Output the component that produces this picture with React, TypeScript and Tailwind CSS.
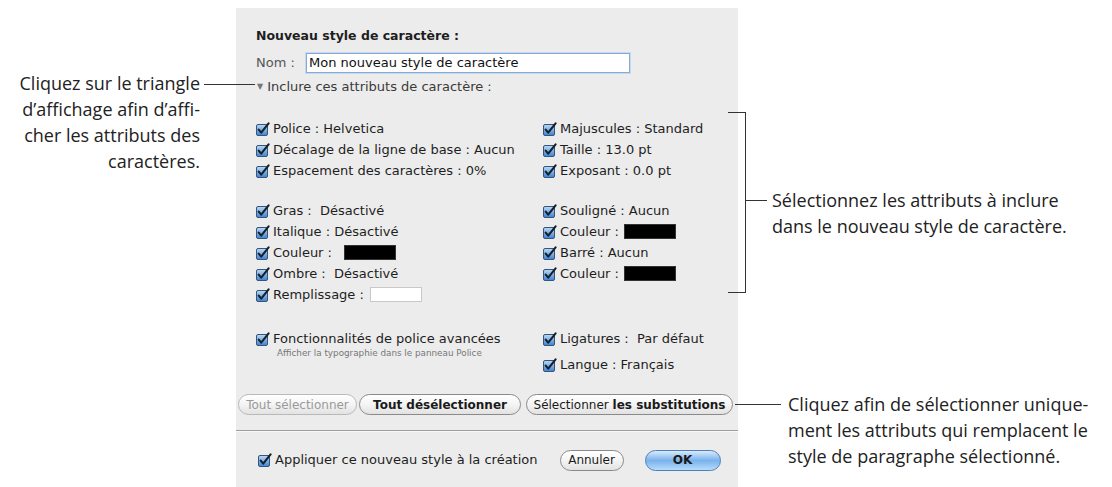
import React from "react";

const Check = () => (
  <svg width="14" height="14" viewBox="0 0 14 14" className="shrink-0">
    <defs>
      <linearGradient id="cbg" x1="0" y1="0" x2="0" y2="1">
        <stop offset="0" stopColor="#bcd9f5" />
        <stop offset="1" stopColor="#3d83d3" />
      </linearGradient>
    </defs>
    <rect x="0.5" y="2.5" width="11" height="11" rx="1.5" fill="url(#cbg)" stroke="#35567a" />
    <path d="M2.7 7.6 L5.2 10.6 L12.6 1.3" fill="none" stroke="#16202b" strokeWidth="2.1" strokeLinecap="round" strokeLinejoin="round" />
  </svg>
);

const Row = ({ children }: { children: React.ReactNode }) => (
  <div className="flex items-center h-[21px] gap-[3px] whitespace-nowrap">
    <Check />
    <span className="flex items-center whitespace-pre">{children}</span>
  </div>
);

const Swatch = ({ white, ml }: { white?: boolean; ml: string }) => (
  <span
    className={
      (white ? "bg-white border border-[#c8c8c8] " : "bg-black border border-[#333] ") +
      "inline-block w-[52px] h-[15px] " +
      ml
    }
  />
);

const Pill = ({
  children,
  className,
}: {
  children: React.ReactNode;
  className: string;
}) => (
  <div
    className={
      "h-[21px] rounded-full border flex items-center justify-center whitespace-nowrap bg-gradient-to-b from-white via-[#f4f4f4] to-[#e2e2e2] " +
      className
    }
  >
    {children}
  </div>
);

export default function App() {
  return (
    <div className="relative w-[1112px] h-[487px] bg-white overflow-hidden">
      <div className="flex h-full">
        {/* left annotation */}
        <div
          className="w-[236px] shrink-0 pt-[70px] pr-[36px] text-right text-[18px] leading-[26px] text-[#222]"
          style={{ fontFamily: "'Open Sans', 'Noto Sans', sans-serif" }}
        >
          <div className="whitespace-nowrap">Cliquez sur le triangle</div>
          <div className="whitespace-nowrap">d’affichage afin d’affi-</div>
          <div className="whitespace-nowrap">cher les attributs des</div>
          <div className="whitespace-nowrap">caractères.</div>
        </div>

        {/* dialog */}
        <div
          className="w-[502px] shrink-0 mt-[8px] bg-[#ececec] pl-[20px] pt-[21px] text-[13px] leading-[14px] text-[#1e1e1e]"
          style={{ fontFamily: "'DejaVu Sans', Verdana, sans-serif" }}
        >
          <div className="font-bold text-[12.5px] h-[14px] whitespace-nowrap">Nouveau style de caractère :</div>
          <div className="flex items-center mt-[10px] h-[20px]">
            <span className="text-[#555] w-[50px]">Nom :</span>
            <div className="w-[324px] h-[20px] bg-white border border-[#86a9d6] shadow-[0_0_0_1px_#c6d9ef] flex items-center px-[2px] text-[#111] whitespace-nowrap">
              Mon nouveau style de caractère
            </div>
          </div>
          <div className="flex items-center mt-[7px] h-[14px] text-[#3a3a3a] whitespace-nowrap">
            <span className="text-[8px] text-[#777] ml-[1px] mr-[4px]">▼</span>
            Inclure ces attributs de caractère :
          </div>

          <div className="grid grid-cols-[287px_1fr] mt-[24px]">
            <div>
              <Row>Police : Helvetica</Row>
              <Row>Décalage de la ligne de base : Aucun</Row>
              <Row>Espacement des caractères : 0%</Row>
            </div>
            <div>
              <Row>Majuscules : Standard</Row>
              <Row>Taille : 13.0 pt</Row>
              <Row>Exposant : 0.0 pt</Row>
            </div>
          </div>

          <div className="grid grid-cols-[287px_1fr] mt-[19px]">
            <div>
              <Row>Gras :  Désactivé</Row>
              <Row>Italique : Désactivé</Row>
              <Row>
                Couleur :<Swatch ml="ml-[12px]" />
              </Row>
              <Row>Ombre :  Désactivé</Row>
              <Row>
                Remplissage :<Swatch white ml="ml-[6px]" />
              </Row>
            </div>
            <div>
              <Row>Souligné : Aucun</Row>
              <Row>
                Couleur :<Swatch ml="ml-[5px]" />
              </Row>
              <Row>Barré : Aucun</Row>
              <Row>
                Couleur :<Swatch ml="ml-[5px]" />
              </Row>
            </div>
          </div>

          <div className="grid grid-cols-[287px_1fr] mt-[23px]">
            <div>
              <Row>Fonctionnalités de police avancées</Row>
              <div className="pl-[21px] text-[8.8px] leading-[10px] text-[#777] mt-[-1px] whitespace-nowrap">
                Afficher la typographie dans le panneau Police
              </div>
            </div>
            <div className="flex flex-col gap-[5px]">
              <Row>Ligatures :  Par défaut</Row>
              <Row>Langue : Français</Row>
            </div>
          </div>

          <div className="flex items-center ml-[-18px] mt-[19px] text-[12px]">
            <Pill className="w-[119px] border-[#b9b9b9] text-[#9a9a9a]">Tout sélectionner</Pill>
            <Pill className="w-[162px] ml-[2px] border-[#8a8a8a] font-bold text-[#1a1a1a]">
              Tout désélectionner
            </Pill>
            <Pill className="w-[207px] ml-[5px] border-[#8a8a8a] text-[#1a1a1a]">
              <span>Sélectionner&nbsp;</span>
              <span className="font-bold">les substitutions</span>
            </Pill>
          </div>

          <div className="ml-[-20px] mt-[15px] h-[1px] bg-[#9e9e9e]" />
          <div className="ml-[-20px] h-[1px] bg-[#f8f8f8]" />

          <div className="flex items-center mt-[16px] h-[24px] pl-[2px]">
            <div className="flex items-center gap-[3px] whitespace-nowrap">
              <Check />
              <span>Appliquer ce nouveau style à la création</span>
            </div>
            <Pill className="w-[64px] ml-[22px] border-[#8a8a8a] text-[#1a1a1a] text-[12px]">Annuler</Pill>
            <div className="w-[76px] h-[21px] ml-[21px] rounded-full border border-[#4f7fb8] flex items-center justify-center font-bold text-[12px] text-[#1a1a1a] bg-gradient-to-b from-[#d8eafc] via-[#79b2ec] to-[#b6dcfa]">
              OK
            </div>
          </div>
        </div>

        {/* right annotations */}
        <div
          className="flex-1 text-[18px] leading-[26px] text-[#222]"
          style={{ fontFamily: "'Open Sans', 'Noto Sans', sans-serif" }}
        >
          <div className="pl-[34px] mt-[187px]">
            <div className="whitespace-nowrap">Sélectionnez les attributs à inclure</div>
            <div className="whitespace-nowrap">dans le nouveau style de caractère.</div>
          </div>
          <div className="pl-[50px] mt-[152px]">
            <div className="whitespace-nowrap">Cliquez afin de sélectionner unique-</div>
            <div className="whitespace-nowrap">ment les attributs qui remplacent le</div>
            <div className="whitespace-nowrap">style de paragraphe sélectionné.</div>
          </div>
        </div>
      </div>

      {/* callout lines */}
      <div className="absolute left-[204px] top-[84px] w-[51px] h-[1px] bg-[#333]" />
      <div className="absolute left-[735px] top-[404px] w-[46px] h-[1px] bg-[#333]" />
      {/* bracket */}
      <div className="absolute left-[728px] top-[112px] w-[18px] h-[181px] border-t border-r border-b border-[#333]" />
      <div className="absolute left-[746px] top-[200px] w-[21px] h-[1px] bg-[#333]" />
    </div>
  );
}
